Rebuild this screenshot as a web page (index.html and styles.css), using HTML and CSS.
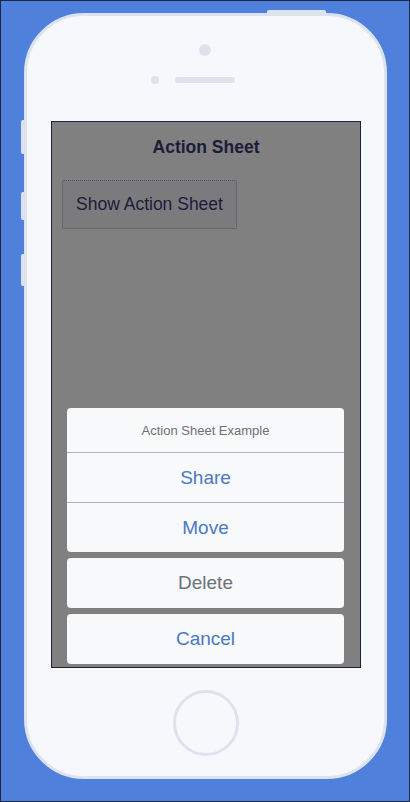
FILE: index.html
```html
<!DOCTYPE html>
<html>
<head>
<meta charset="utf-8">
<link rel="stylesheet" href="styles.css">
</head>
<body>
<div class="stage">
  <div class="phone">
    <span class="top-btn"></span>
    <span class="side-btn b1"></span>
    <span class="side-btn b2"></span>
    <span class="side-btn b3"></span>
    <div class="bezel-top">
      <div class="camera"></div>
      <div class="speaker-row">
        <span class="sensor"></span>
        <span class="speaker"></span>
      </div>
    </div>
    <div class="screen">
      <div class="title">Action Sheet</div>
      <div class="show-btn">Show Action Sheet</div>
      <div class="sheet">
        <div class="group">
          <div class="sheet-title">Action Sheet Example</div>
          <div class="item blue sep">Share</div>
          <div class="item blue sep">Move</div>
        </div>
        <div class="group">
          <div class="item gray">Delete</div>
        </div>
        <div class="group">
          <div class="item blue">Cancel</div>
        </div>
      </div>
    </div>
    <div class="bezel-bottom">
      <div class="home"></div>
    </div>
  </div>
</div>
</body>
</html>
```
FILE: styles.css
```css
html, body {
  margin: 0;
  padding: 0;
}
body {
  width: 410px;
  height: 802px;
  overflow: hidden;
  font-family: "Liberation Sans", Arial, sans-serif;
}
.stage {
  width: 410px;
  height: 802px;
  box-sizing: border-box;
  border: 1px solid #1f2640;
  background: #4f80dc;
  padding-top: 12px;
  padding-left: 23px;
}
.phone {
  position: relative;
  width: 363px;
  height: 766px;
  box-sizing: border-box;
  border: 3px solid #dde3ee;
  border-radius: 60px;
  background: #f7f8fb;
  display: flex;
  flex-direction: column;
}
.top-btn {
  position: absolute;
  top: -6px;
  left: 240px;
  width: 59px;
  height: 4px;
  background: #dde3ee;
  border-radius: 2px 2px 0 0;
}
.side-btn {
  position: absolute;
  left: -6px;
  width: 4px;
  background: #dde3ee;
  border-radius: 2px 0 0 2px;
}
.b1 { top: 104px; height: 34px; }
.b2 { top: 176px; height: 28px; }
.b3 { top: 238px; height: 32px; }
.bezel-top {
  height: 105px;
  display: flex;
  flex-direction: column;
}
.camera {
  width: 12px;
  height: 12px;
  border-radius: 50%;
  background: #dde3ee;
  margin: 28px 0 0 172px;
}
.speaker-row {
  display: flex;
  align-items: center;
  gap: 16px;
  margin: 20px 0 0 124px;
}
.sensor {
  width: 8px;
  height: 8px;
  border-radius: 50%;
  background: #dde3ee;
}
.speaker {
  width: 60px;
  height: 6px;
  border-radius: 3px;
  background: #dde3ee;
}
.screen {
  margin-left: 24px;
  width: 310px;
  height: 547px;
  box-sizing: border-box;
  border: 1px solid #1e2040;
  background: #808080;
  display: flex;
  flex-direction: column;
}
.title {
  text-align: center;
  font-weight: bold;
  font-size: 17.5px;
  color: #1c1c3a;
  margin-top: 15px;
  line-height: 20px;
}
.show-btn {
  align-self: flex-start;
  margin: 23px 0 0 10px;
  width: 175px;
  height: 49px;
  box-sizing: border-box;
  border: 1px dotted #55555c;
  border-radius: 2px;
  background: #7b7b7e;
  color: #1c1c3a;
  font-size: 17.5px;
  display: flex;
  align-items: center;
  justify-content: center;
}
.sheet {
  margin-top: auto;
  padding: 0 16px 3px 15px;
  display: flex;
  flex-direction: column;
  gap: 6px;
}
.group {
  background: #f8f9fb;
  border-radius: 4px;
  overflow: hidden;
}
.sheet-title {
  height: 44px;
  display: flex;
  align-items: center;
  justify-content: center;
  font-size: 13px;
  color: #6d7078;
}
.item {
  height: 50px;
  display: flex;
  align-items: center;
  justify-content: center;
  font-size: 19px;
}
.item.sep {
  border-top: 1px solid #a9b3c6;
  height: 49px;
}
.blue { color: #4a78c2; }
.gray { color: #6c727c; }
.bezel-bottom {
  flex: 1;
  display: flex;
  justify-content: center;
  padding-top: 22px;
}
.home {
  width: 66px;
  height: 66px;
  box-sizing: border-box;
  border: 3px solid #dde3ee;
  border-radius: 50%;
}
```
